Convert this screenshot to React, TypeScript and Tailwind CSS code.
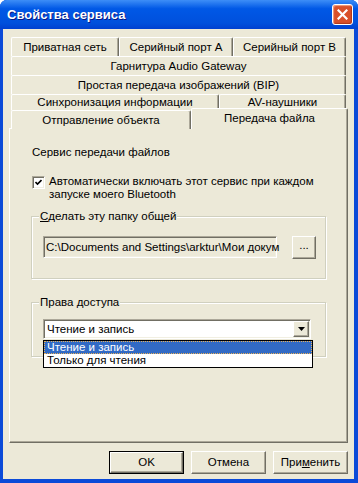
import React from 'react';

const raised =
  'border border-t-white border-l-white border-r-[#716F64] border-b-[#716F64] shadow-[inset_-1px_-1px_0_#ACA899] bg-[#ECE9D8]';
const sunken =
  'border border-t-[#ACA899] border-l-[#ACA899] border-r-white border-b-white shadow-[inset_1px_1px_0_#716F64,inset_-1px_-1px_0_#F1EFE2]';

function Tab({ label, w, h = 'h-full' }: { label: string; w: string; h?: string }) {
  return (
    <div
      className={`${w} ${h} flex items-center justify-center rounded-t-[2px] border-t border-l border-r border-t-white border-l-white border-r-[#716F64] shadow-[inset_-1px_0_0_#ACA899] bg-[#ECE9D8] whitespace-nowrap`}
    >
      {label}
    </div>
  );
}

function Group({ label, children, className }: { label: React.ReactNode; children: React.ReactNode; className: string }) {
  return (
    <div className={`relative w-[295px] border border-[#D0D0BF] shadow-[1px_1px_0_white,inset_1px_1px_0_white] ${className}`}>
      <span className="absolute -top-[7px] left-[7px] bg-[#ECE9D8] px-[1px]">{label}</span>
      {children}
    </div>
  );
}

function DlgButton({ children, isDefault }: { children: React.ReactNode; isDefault?: boolean }) {
  if (isDefault) {
    return (
      <div className="h-[23px] w-[75px] border border-black">
        <div className={`flex h-full w-full items-center justify-center ${raised}`}>{children}</div>
      </div>
    );
  }
  return <div className={`flex h-[23px] w-[75px] items-center justify-center ${raised}`}>{children}</div>;
}

export default function App() {
  return (
    <div className="h-[483px] w-[358px] font-['Liberation_Sans',Arial,sans-serif] text-[11.5px] leading-[13px] text-black">
      <div className="flex h-full w-full flex-col overflow-hidden rounded-t-[7px] [background-color:#0b4ad8]">
        {/* title bar */}
        <div className="flex h-[29px] shrink-0 items-center justify-between pl-[7px] pr-[5px] [background-color:#0055e5] [background-image:linear-gradient(180deg,#3d8ef7,#0058e6_30%,#0050dc_80%,#0040d0)]">
          <span className="text-[13px] font-bold text-white [text-shadow:1px_1px_0_#0a1883]">Свойства сервиса</span>
          <div className="flex h-[21px] w-[21px] items-center justify-center rounded-[3px] border border-white [background-color:#d9502a] shadow-[inset_1px_1px_1px_#f2a080,inset_-1px_-1px_1px_#b0381a]">
            <svg width="11" height="11" viewBox="0 0 11 11">
              <path d="M1.5 1.5 L9.5 9.5 M9.5 1.5 L1.5 9.5" stroke="white" strokeWidth="2.2" strokeLinecap="square" />
            </svg>
          </div>
        </div>

        {/* body, blue frame shows through the padding */}
        <div className="flex flex-1 flex-col pb-[4px] pl-[3px] pr-[4px]">
          <div className="flex flex-1 flex-col bg-[#ECE9D8] px-[6px] pt-[8px]">
            {/* tabs */}
            <div className="flex flex-col px-[2px]">
              <div className="flex h-[19px]">
                <Tab label="Приватная сеть" w="w-[108px]" />
                <Tab label="Серийный порт А" w="w-[114px]" />
                <Tab label="Серийный порт В" w="w-[113px]" />
              </div>
              <div className="flex h-[19px]">
                <Tab label="Гарнитура Audio Gateway" w="w-[335px]" />
              </div>
              <div className="flex h-[19px]">
                <Tab label="Простая передача изображений (BIP)" w="w-[335px]" />
              </div>
              <div className="flex h-[16px]">
                <Tab label="Синхронизация информации" w="w-[208px]" />
                <Tab label="AV-наушники" w="w-[127px]" />
              </div>
              <div className="relative z-10 -mb-[1px] flex h-[19px] items-end">
                <Tab label="Отправление объекта" w="w-[180px]" h="h-[19px]" />
                <div className="-mr-[2px] -mt-[2px] flex h-[21px] w-[157px] items-start justify-center rounded-t-[2px] border-t border-l border-r border-t-white border-l-white border-r-[#716F64] bg-[#ECE9D8] pt-[3px] shadow-[inset_-1px_0_0_#ACA899]">
                  Передача файла
                </div>
              </div>
            </div>

            {/* panel */}
            <div className={`flex flex-1 flex-col pl-[21px] pt-[17px] ${raised}`}>
              <div className="pl-[1px]">Сервис передачи файлов</div>

              <div className="mt-[17px] flex pl-[1px]">
                <div className={`flex h-[13px] w-[13px] shrink-0 items-center justify-center bg-white ${sunken}`}>
                  <svg width="7" height="7" viewBox="0 0 7 7">
                    <path d="M0.5 3 L2.5 5 L6.5 1" stroke="black" strokeWidth="1.6" fill="none" />
                  </svg>
                </div>
                <div className="ml-[4px] -mt-[1px]">
                  Автоматически включать этот сервис при каждом
                  <br />
                  запуске моего Bluetooth
                </div>
              </div>

              <Group
                className="mt-[15px] h-[63px] pl-[11px] pt-[19px]"
                label={
                  <>
                    <span className="underline">С</span>делать эту папку общей
                  </>
                }
              >
                <div className="flex items-start">
                  <div className={`flex h-[22px] w-[234px] items-center whitespace-nowrap bg-[#ECE9D8] pl-[2px] ${sunken}`}>
                    C:\Documents and Settings\arktur\Мои докум
                  </div>
                  <div className={`ml-[15px] flex h-[23px] w-[24px] items-center justify-center pb-[4px] ${raised}`}>...</div>
                </div>
              </Group>

              <Group className="mt-[23px] h-[55px] pl-[11px] pt-[16px]" label="Права доступа">
                <div className="relative w-[268px]">
                  <div className={`flex h-[20px] items-center justify-between bg-white pl-[3px] pr-[1px] ${sunken}`}>
                    <span>Чтение и запись</span>
                    <div className={`flex h-[16px] w-[16px] items-center justify-center ${raised}`}>
                      <svg width="7" height="4" viewBox="0 0 7 4">
                        <path d="M0 0 H7 L3.5 4 Z" fill="black" />
                      </svg>
                    </div>
                  </div>
                  <div className="absolute left-0 top-[21px] z-20 w-[270px] border border-black bg-white">
                    <div className="h-[13px] border border-dotted border-[#E8B058] bg-[#316AC5] pl-[2px] leading-[11px] text-white">
                      Чтение и запись
                    </div>
                    <div className="h-[13px] pl-[3px]">Только для чтения</div>
                  </div>
                </div>
              </Group>
            </div>

            {/* buttons */}
            <div className="mb-[5px] mt-[8px] flex h-[23px] shrink-0 justify-end gap-[7px]">
              <DlgButton isDefault>OK</DlgButton>
              <DlgButton>Отмена</DlgButton>
              <DlgButton>
                При<span className="underline">м</span>енить
              </DlgButton>
            </div>
          </div>
        </div>
      </div>
    </div>
  );
}
